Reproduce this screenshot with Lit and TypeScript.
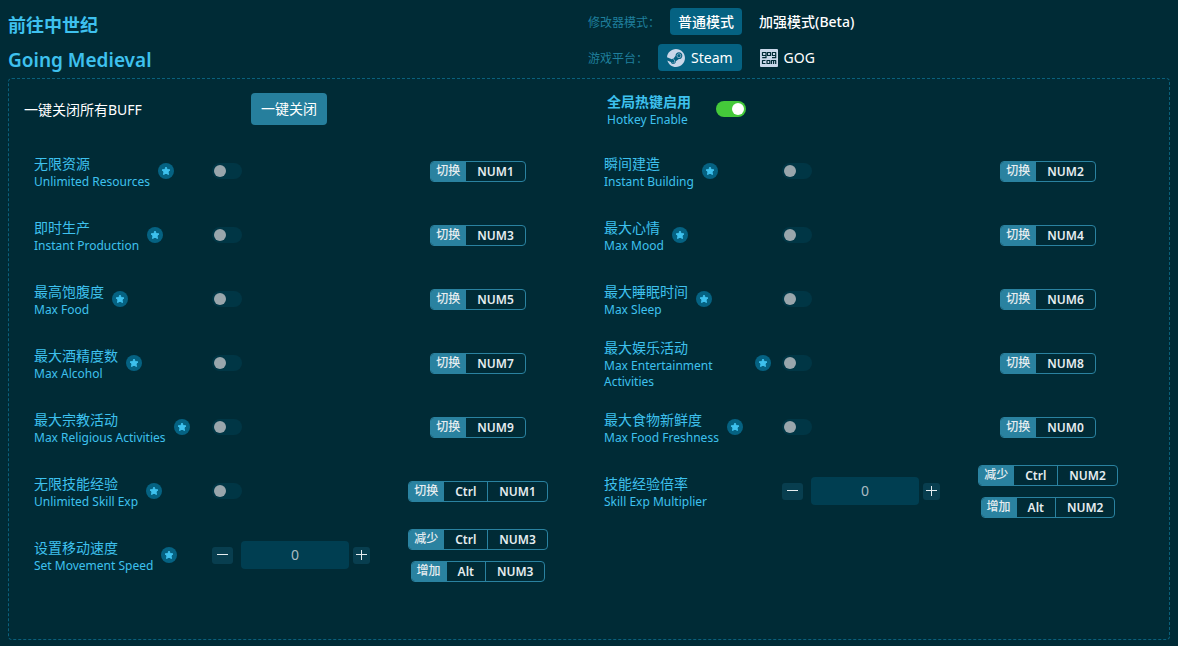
import { LitElement, html, css, svg, nothing } from "lit";
import { customElement, property, state } from "lit/decorators.js";
import { classMap } from "lit/directives/class-map.js";

interface Hotkey {
  action: string;
  keys: string[];
}

interface Cheat {
  id: string;
  name: string;
  en: string;
  kind: "toggle" | "number";
  starred: boolean;
  hotkeys: Hotkey[];
}

const toggle = (id: string, name: string, en: string, ...keys: string[]): Cheat => ({
  id, name, en, kind: "toggle", starred: true, hotkeys: [{ action: "切换", keys }],
});

const stepper = (id: string, name: string, en: string, key: string, starred: boolean): Cheat => ({
  id, name, en, kind: "number", starred,
  hotkeys: [
    { action: "减少", keys: ["Ctrl", key] },
    { action: "增加", keys: ["Alt", key] },
  ],
});

const CHEATS: Cheat[] = [
  toggle("resources", "无限资源", "Unlimited Resources", "NUM1"),
  toggle("building", "瞬间建造", "Instant Building", "NUM2"),
  toggle("production", "即时生产", "Instant Production", "NUM3"),
  toggle("mood", "最大心情", "Max Mood", "NUM4"),
  toggle("food", "最高饱腹度", "Max Food", "NUM5"),
  toggle("sleep", "最大睡眠时间", "Max Sleep", "NUM6"),
  toggle("alcohol", "最大酒精度数", "Max Alcohol", "NUM7"),
  toggle("entertainment", "最大娱乐活动", "Max Entertainment Activities", "NUM8"),
  toggle("religion", "最大宗教活动", "Max Religious Activities", "NUM9"),
  toggle("freshness", "最大食物新鲜度", "Max Food Freshness", "NUM0"),
  toggle("skill-exp", "无限技能经验", "Unlimited Skill Exp", "Ctrl", "NUM1"),
  stepper("skill-multiplier", "技能经验倍率", "Skill Exp Multiplier", "NUM2", false),
  stepper("speed", "设置移动速度", "Set Movement Speed", "NUM3", true),
];

const steamIcon = svg`<path fill="#c9d7e9" d="M11.979 0C5.678 0 .511 4.86.022 11.037l6.432 2.658c.545-.371 1.203-.59 1.912-.59.063 0 .125.004.188.006l2.861-4.142V8.91c0-2.495 2.028-4.524 4.524-4.524 2.494 0 4.524 2.031 4.524 4.527s-2.03 4.525-4.524 4.525h-.105l-4.076 2.911c0 .052.004.105.004.159 0 1.875-1.515 3.396-3.39 3.396-1.635 0-3.016-1.173-3.331-2.727L.436 15.27C1.862 20.307 6.486 24 11.979 24c6.627 0 11.999-5.373 11.999-12S18.605 0 11.979 0zM7.54 18.21l-1.473-.61c.262.543.714.999 1.314 1.25 1.297.539 2.793-.076 3.332-1.375.263-.63.264-1.319.005-1.949s-.75-1.121-1.377-1.383c-.624-.26-1.29-.249-1.878-.03l1.523.63c.956.4 1.409 1.5 1.009 2.455-.397.957-1.497 1.41-2.454 1.012H7.54zm11.415-9.303c0-1.662-1.353-3.015-3.015-3.015-1.665 0-3.015 1.353-3.015 3.015 0 1.665 1.35 3.015 3.015 3.015 1.663 0 3.015-1.35 3.015-3.015zm-5.273-.005c0-1.252 1.013-2.266 2.265-2.266 1.249 0 2.266 1.014 2.266 2.266 0 1.251-1.017 2.265-2.266 2.265-1.253 0-2.265-1.014-2.265-2.265z"/>`;

const gogIcon = svg`
  <rect width="18" height="18" rx="1" fill="#c9d7e9"/>
  <g fill="none" stroke="#002b36" stroke-width="1.2" stroke-linejoin="round">
    <path d="M6 6.500h-3.500v-3h3.500v5.200h-3.800M7.500 3.500h3v3h-3zM15.700 6.500h-3.300v-3h3.300v5.200h-3.700"/>
    <path d="M5.500 11.500h-3v3h3M7 11.500h2.800v3h-2.800zM11.500 15v-3.500h4.200v3.500M13.600 11.500v3.500"/>
  </g>`;

/** Pill switch built on a native checkbox. */
@customElement("pill-switch")
export class PillSwitch extends LitElement {
  @property({ type: Boolean }) checked = false;
  @property() label = "";

  static styles = css`
    :host { display: block; line-height: 0; }
    .switch {
      appearance: none;
      display: block;
      width: 30px;
      height: 16px;
      margin: 0;
      padding: 2px;
      border-radius: 8px;
      background: #003645;
      cursor: pointer;
      box-sizing: border-box;
    }
    .switch::before {
      content: "";
      display: block;
      width: 12px;
      height: 12px;
      border-radius: 50%;
      background: #99a6ac;
    }
    .switch:checked { background: #44c93a; }
    .switch:checked::before { background: #fff; margin-left: auto; }
  `;

  render() {
    return html`<input class="switch" type="checkbox" role="switch" aria-label=${this.label}
      .checked=${this.checked}
      @change=${(e: Event) => { this.checked = (e.target as HTMLInputElement).checked; }}>`;
  }
}

/** Minus button, value box and plus button. */
@customElement("value-stepper")
export class ValueStepper extends LitElement {
  @property({ type: Number }) value = 0;
  @property() label = "";

  static styles = css`
    :host { display: flex; align-items: center; }
    .step {
      height: 17px;
      width: 17px;
      padding: 0;
      border: 0;
      border-radius: 3px;
      background: #083e4f;
      display: grid;
      place-items: center;
      cursor: pointer;
    }
    .minus { width: 21px; margin-right: 8px; }
    .plus { margin-left: 4px; }
    .glyph { display: block; width: 11px; height: 11px; }
    .value {
      width: 108px;
      height: 28px;
      box-sizing: border-box;
      border: 0;
      border-radius: 4px;
      padding: 0;
      background: #003e51;
      color: #aabbc2;
      font: 14px/28px "Noto Sans", "Noto Sans CJK SC", sans-serif;
      text-align: center;
    }
  `;

  render() {
    return html`
      <button class="step minus" aria-label="减少" @click=${() => { this.value--; }}>
        <svg class="glyph" viewBox="0 0 11 11"><path d="M0 4.500h11" stroke="#e6edf0"/></svg>
      </button>
      <input class="value" type="text" inputmode="numeric" aria-label=${this.label} .value=${String(this.value)}
        @change=${(e: Event) => { this.value = Number((e.target as HTMLInputElement).value) || 0; }}>
      <button class="step plus" aria-label="增加" @click=${() => { this.value++; }}>
        <svg class="glyph" viewBox="0 0 11 11"><path d="M0 4.500h11M5.500 0v10" stroke="#e6edf0"/></svg>
      </button>`;
  }
}

/** One cheat: names, star, control and its hotkeys. */
@customElement("cheat-row")
export class CheatRow extends LitElement {
  @property({ attribute: false }) cheat!: Cheat;

  static styles = css`
    :host {
      display: grid;
      grid-template-columns: 167px 158px 1fr;
      column-gap: 11px;
      align-items: center;
      height: 64px;
      box-sizing: border-box;
      padding: 0 14px 0 15px;
    }
    .label { display: flex; align-items: center; gap: 8px; color: #3ec1ee; }
    .names { padding-top: 2px; }
    .name { display: block; font-size: 14px; line-height: 20px; }
    .en { display: block; font-size: 12px; line-height: 16px; }
    .star { flex: none; width: 16px; height: 16px; }
    .hotkeys {
      display: flex;
      flex-direction: column;
      align-items: center;
      gap: 11px;
    }
    .hotkey {
      display: flex;
      height: 21px;
      box-sizing: border-box;
      border: 1px solid #2a82a0;
      border-radius: 4px;
      overflow: hidden;
      color: #e6edf0;
      font-size: 12px;
      font-weight: 600;
      line-height: 19px;
    }
    .action { padding: 0 6px 0 5px; background: #2a82a0; font-weight: 500; line-height: 18px; }
    .key { padding: 0 11px; }
    .key + .key { border-left: 1px solid #2a82a0; }
  `;

  render() {
    const c = this.cheat;
    return html`
      <div class="label">
        <span class="names"><span class="name">${c.name}</span><span class="en">${c.en}</span></span>
        ${c.starred
          ? html`<svg class="star" viewBox="0 0 16 16" aria-hidden="true">
              <circle cx="8" cy="8" r="8" fill="#056282"/>
              <path fill="#3ec1ee" stroke="#3ec1ee" stroke-linejoin="round" d="M8 4l1.200 2.500 2.800.4-2 1.900.5 2.700L8 10.200l-2.500 1.300.5-2.700-2-1.900 2.800-.4z"/>
            </svg>`
          : nothing}
      </div>
      <div>
        ${c.kind === "toggle"
          ? html`<pill-switch .label=${c.en}></pill-switch>`
          : html`<value-stepper .label=${c.en}></value-stepper>`}
      </div>
      <div class="hotkeys">
        ${c.hotkeys.map((h) => html`<div class="hotkey">
          <span class="action">${h.action}</span>${h.keys.map((k) => html`<span class="key">${k}</span>`)}
        </div>`)}
      </div>`;
  }
}

@customElement("app-root")
export class AppRoot extends LitElement {
  @state() private mode = "normal";
  @state() private platform = "steam";

  static styles = css`
    :host {
      display: flex;
      flex-direction: column;
      min-height: 100vh;
      box-sizing: border-box;
      padding: 8px 8px 6px;
      background: #002b36;
      color: #fff;
      font-family: "Noto Sans", "Noto Sans CJK SC", sans-serif;
      font-size: 14px;
    }
    .top { display: grid; grid-template-columns: 1fr 1fr; height: 70px; padding-right: 2px; }
    .title { margin: 0; color: #3ec1ee; font-weight: 700; line-height: 35px; }
    .cn { font-size: 18px; }
    .latin { font-size: 19px; font-weight: 600; }
    .choices { display: flex; flex-direction: column; gap: 9px; }
    .choice { display: flex; align-items: center; }
    .caption { color: #1f7f9c; font-size: 12px; margin-right: 10px; }
    .option {
      display: flex;
      align-items: center;
      gap: 6px;
      height: 27px;
      padding: 0 8px;
      margin-right: 9px;
      border: 0;
      border-radius: 4px;
      background: none;
      color: #fff;
      font: 14px/27px "Noto Sans", "Noto Sans CJK SC", sans-serif;
      cursor: pointer;
    }
    .active { background: #056282; }
    .medium { font-weight: 500; }
    .with-icon { padding: 0 9px; }
    .icon { width: 18px; height: 18px; }
    .panel {
      flex: 1;
      border: 1px dashed #0a607c;
      border-radius: 4px;
      padding: 0 10px;
    }
    .pair { display: grid; grid-template-columns: 1fr 1fr; }
    .bar { height: 60px; align-items: center; }
    .close-all { display: grid; grid-template-columns: 227px auto; align-items: center; justify-content: start; padding-left: 5px; }
    .close {
      height: 32px;
      padding: 0 10px;
      border: 0;
      border-radius: 4px;
      background: #267f9d;
      color: #fff;
      font: 14px/32px "Noto Sans", "Noto Sans CJK SC", sans-serif;
      cursor: pointer;
    }
    .global { display: flex; align-items: center; gap: 25px; padding-left: 18px; color: #3ec1ee; }
    .global-names { padding-top: 2px; }
    .global-name { display: block; font-size: 14px; font-weight: 700; line-height: 20px; }
    .global-en { display: block; font-size: 12px; line-height: 16px; }
  `;

  private option(group: "mode" | "platform", id: string, text: string, icon?: unknown) {
    const active = this[group] === id;
    return html`<button class=${classMap({ option: true, active, medium: !icon, "with-icon": !!icon })}
      aria-pressed=${active ? "true" : "false"} @click=${() => { this[group] = id; }}>${icon ?? nothing}${text}</button>`;
  }

  render() {
    return html`
      <header class="top">
        <div>
          <h1 class="title cn">前往中世纪</h1>
          <h2 class="title latin">Going Medieval</h2>
        </div>
        <div class="choices">
          <div class="choice" role="group" aria-label="修改器模式">
            <span class="caption">修改器模式：</span>
            ${this.option("mode", "normal", "普通模式")}
            ${this.option("mode", "beta", "加强模式(Beta)")}
          </div>
          <div class="choice" role="group" aria-label="游戏平台">
            <span class="caption">游戏平台：</span>
            ${this.option("platform", "steam", "Steam", html`<svg class="icon" viewBox="0 0 24 24">${steamIcon}</svg>`)}
            ${this.option("platform", "gog", "GOG", html`<svg class="icon" viewBox="0 0 18 18">${gogIcon}</svg>`)}
          </div>
        </div>
      </header>
      <main class="panel">
        <div class="pair bar">
          <div class="close-all">
            <span>一键关闭所有BUFF</span>
            <button class="close">一键关闭</button>
          </div>
          <div class="global">
            <span class="global-names"><span class="global-name">全局热键启用</span><span class="global-en">Hotkey Enable</span></span>
            <pill-switch checked label="Hotkey Enable"></pill-switch>
          </div>
        </div>
        <div class="pair">${CHEATS.map((c) => html`<cheat-row .cheat=${c}></cheat-row>`)}</div>
      </main>`;
  }
}
